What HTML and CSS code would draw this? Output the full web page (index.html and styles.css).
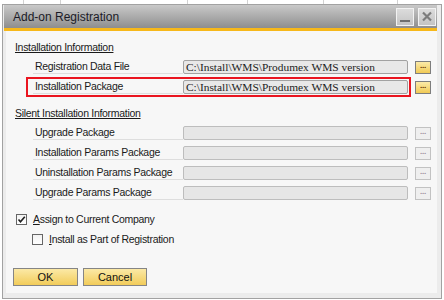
FILE: index.html
```html
<!DOCTYPE html>
<html lang="en">
<head>
  <meta charset="UTF-8" />
  <title>Add-on Registration</title>
  <link rel="stylesheet" href="styles.css">
</head>
<body>
  <div class="backdrop">
    <span></span><span></span><span></span><span></span><span></span><span></span><span></span>
  </div>

  <div class="window">
    <div class="titlebar">
      <span class="title">Add-on Registration</span>
      <div class="title-buttons">
        <button class="tb-btn" title="Minimize">
          <svg width="16" height="16" viewBox="0 0 16 16"><rect x="3" y="11" width="10" height="2" fill="#6e6e6e"/></svg>
        </button>
        <button class="tb-btn" title="Close">
          <svg width="16" height="16" viewBox="0 0 16 16"><path d="M4 3.5 L12 11.5 M12 3.5 L4 11.5" stroke="#7c7c7c" stroke-width="2.2" fill="none"/></svg>
        </button>
      </div>
    </div>
    <div class="accent"></div>

    <div class="panel">
      <div class="section">Installation Information</div>
      <div class="row">
        <div class="row-main">
          <span class="field-label">Registration Data File</span>
          <div class="field">C:\Install\WMS\Produmex WMS version</div>
        </div>
        <button class="browse">...</button>
      </div>
      <div class="row">
        <div class="row-main highlight">
          <span class="field-label">Installation Package</span>
          <div class="field">C:\Install\WMS\Produmex WMS version</div>
        </div>
        <button class="browse">...</button>
      </div>

      <div class="section second">Silent Installation Information</div>
      <div class="row">
        <div class="row-main">
          <span class="field-label">Upgrade Package</span>
          <div class="field disabled"></div>
        </div>
        <button class="browse disabled">...</button>
      </div>
      <div class="row">
        <div class="row-main">
          <span class="field-label">Installation Params Package</span>
          <div class="field disabled"></div>
        </div>
        <button class="browse disabled">...</button>
      </div>
      <div class="row">
        <div class="row-main">
          <span class="field-label">Uninstallation Params Package</span>
          <div class="field disabled"></div>
        </div>
        <button class="browse disabled">...</button>
      </div>
      <div class="row">
        <div class="row-main">
          <span class="field-label">Upgrade Params Package</span>
          <div class="field disabled"></div>
        </div>
        <button class="browse disabled">...</button>
      </div>

      <div class="check-row first">
        <span class="checkbox">
          <svg width="9" height="9" viewBox="0 0 9 9"><path d="M1.5 4.5 L3.5 6.8 L7.8 1.8" stroke="#1e1e1e" stroke-width="1.6" fill="none"/></svg>
        </span>
        <span><u>A</u>ssign to Current Company</span>
      </div>
      <div class="check-row nested">
        <span class="checkbox"></span>
        <span><u>I</u>nstall as Part of Registration</span>
      </div>

      <div class="actions">
        <button class="btn ok">OK</button>
        <button class="btn cancel">Cancel</button>
      </div>
    </div>
  </div>
</body>
</html>
```

FILE: styles.css
```css
body {
  margin: 0;
  background: #fff;
  font-family: "Liberation Sans", Arial, sans-serif;
  font-size: 10.5px;
  letter-spacing: -0.3px;
  color: #1a1a1a;
}

.backdrop {
  display: grid;
  grid-template-columns: 24px 37px 127px 60px 76px 74px 1fr;
  height: 4px;
}
.backdrop span {
  border-right: 1px solid #d2d2d2;
}
.backdrop span:last-child {
  border-right: none;
}

.window {
  box-sizing: border-box;
  margin-left: 2px;
  width: 440px;
  height: 295px;
  border: 1px solid #a2a2a2;
  background: #ececec;
  padding: 0 4px 5px 1px;
  display: flex;
  flex-direction: column;
}

.titlebar {
  height: 23px;
  background: linear-gradient(#c9c9c9, #8e8e8e);
  display: flex;
  align-items: center;
  justify-content: space-between;
  padding: 0 1px 0 9px;
}
.title {
  font-size: 12px;
  letter-spacing: 0;
  color: #1b1b27;
  padding-top: 1px;
}
.title-buttons {
  display: flex;
  gap: 4px;
}
.tb-btn {
  width: 18px;
  height: 18px;
  box-sizing: border-box;
  border: 1px solid #f2f2f2;
  background: linear-gradient(#dcdcdc, #c4c4c4);
  padding: 0;
  display: flex;
  align-items: center;
  justify-content: center;
}

.accent {
  height: 3px;
  background: #f7b81a;
}

.panel {
  flex: 1;
  margin-left: 2px;
  background: #f7f7f7;
  padding: 10px 0 0 9px;
}

.section {
  line-height: 13px;
  text-decoration: underline;
}
.section.second {
  margin-top: 10px;
}
.section + .row {
  margin-top: 3px;
}

.row {
  display: flex;
  align-items: center;
  height: 20px;
}
.row-main {
  display: flex;
  align-items: center;
  box-sizing: border-box;
  height: 20px;
  width: 385px;
  margin-left: 11px;
  padding: 0 3px 0 7px;
}
.row-main.highlight {
  box-shadow: inset 0 0 0 2px #ea1520;
}
.field-label {
  box-sizing: border-box;
  width: 150px;
  height: 14px;
  padding-left: 2px;
  line-height: 13px;
  border-bottom: 1px solid #dedede;
  white-space: nowrap;
}
.field {
  box-sizing: border-box;
  width: 225px;
  height: 14px;
  border: 1px solid #a2a2a2;
  border-radius: 2px;
  background: #e8e8e8;
  padding-left: 2px;
  font-family: "Liberation Serif", "Times New Roman", serif;
  font-size: 11.4px;
  letter-spacing: 0;
  line-height: 12px;
  color: #222;
  white-space: nowrap;
  overflow: hidden;
}
.field.disabled {
  border-color: #bdbdbd;
  background: #e6e6e6;
}

.browse {
  box-sizing: border-box;
  margin-left: 4px;
  width: 16px;
  height: 13px;
  border: 1px solid #7e7e7e;
  background: linear-gradient(#fbeaa8, #f1ca55);
  padding: 0 0 2px;
  font: bold 8px/1 "Liberation Sans", Arial, sans-serif;
  color: #5b2a00;
  letter-spacing: -0.3px;
}
.browse.disabled {
  border-color: #c2c2c2;
  background: #efefef;
  color: #9a8f9a;
}

.check-row {
  display: flex;
  align-items: center;
  gap: 6px;
  height: 20px;
}
.check-row.first {
  margin-top: 6px;
  margin-left: 1px;
}
.check-row.nested {
  margin-left: 17px;
}
.checkbox {
  box-sizing: border-box;
  width: 11px;
  height: 11px;
  border: 1px solid #666;
  background: linear-gradient(#f2f2f2, #fff);
  display: flex;
  align-items: center;
  justify-content: center;
}

.actions {
  display: flex;
  gap: 5px;
  margin: 19px 0 0 -2px;
}
.btn {
  box-sizing: border-box;
  height: 18px;
  border: 1px solid #858585;
  background: linear-gradient(#fbe9a6, #f2cc5a);
  padding: 0;
  font: 11px "Liberation Sans", Arial, sans-serif;
  color: #111;
}
.btn.ok {
  width: 65px;
}
.btn.cancel {
  width: 64px;
}
```
